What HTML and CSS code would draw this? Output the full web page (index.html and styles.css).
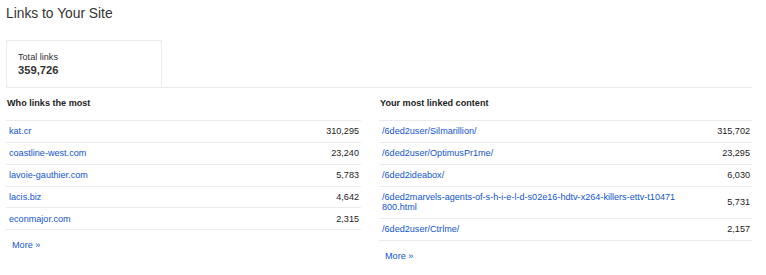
FILE: index.html
```html
<!DOCTYPE html>
<html>
<head>
<meta charset="utf-8">
<title>Links to Your Site</title>
<link rel="stylesheet" href="styles.css">
</head>
<body>
<div class="page">
  <h1 class="title">Links to Your Site</h1>
  <div class="summary">
    <div class="stat">
      <div class="stat-label">Total links</div>
      <div class="stat-value">359,726</div>
    </div>
  </div>
  <div class="columns">
    <section class="col col-left">
      <h2 class="col-heading">Who links the most</h2>
      <div class="list">
        <div class="row"><a class="name" href="#">kat.cr</a><span class="count">310,295</span></div>
        <div class="row"><a class="name" href="#">coastline-west.com</a><span class="count">23,240</span></div>
        <div class="row"><a class="name" href="#">lavoie-gauthier.com</a><span class="count">5,783</span></div>
        <div class="row"><a class="name" href="#">lacis.biz</a><span class="count">4,642</span></div>
        <div class="row"><a class="name" href="#">econmajor.com</a><span class="count">2,315</span></div>
      </div>
      <a class="more" href="#">More &raquo;</a>
    </section>
    <section class="col col-right">
      <h2 class="col-heading">Your most linked content</h2>
      <div class="list">
        <div class="row"><a class="name" href="#">/6ded2user/Silmarillion/</a><span class="count">315,702</span></div>
        <div class="row"><a class="name" href="#">/6ded2user/OptimusPr1me/</a><span class="count">23,295</span></div>
        <div class="row"><a class="name" href="#">/6ded2ideabox/</a><span class="count">6,030</span></div>
        <div class="row"><a class="name" href="#">/6ded2marvels-agents-of-s-h-i-e-l-d-s02e16-hdtv-x264-killers-ettv-t10471800.html</a><span class="count">5,731</span></div>
        <div class="row"><a class="name" href="#">/6ded2user/Ctrlme/</a><span class="count">2,157</span></div>
      </div>
      <a class="more" href="#">More &raquo;</a>
    </section>
  </div>
</div>
</body>
</html>
```

FILE: styles.css
```css
* { box-sizing: border-box; }

html, body {
  margin: 0;
  padding: 0;
  background: #ffffff;
}

body {
  font-family: "Liberation Sans", Arial, sans-serif;
  font-size: 9.1px;
  color: #222222;
}

.page {
  width: 752px;
  padding: 6px 0 0 6px;
}

.title {
  margin: 0;
  font-size: 13.8px;
  font-weight: normal;
  line-height: 16px;
  color: #333333;
}

.summary {
  margin-top: 18px;
  border-bottom: 1px solid #ebebeb;
  display: flex;
}

.stat {
  width: 156px;
  height: 47px;
  border: 1px solid #ebebeb;
  border-bottom: none;
  padding: 10.6px 11px 0 11px;
}

.stat-label {
  line-height: 10.5px;
  color: #333333;
}

.stat-value {
  margin-top: 1.8px;
  font-size: 11.2px;
  font-weight: bold;
  line-height: 13px;
  color: #333333;
}

.columns {
  display: grid;
  grid-template-columns: 355px 373px;
  column-gap: 18px;
}

.col-heading {
  margin: 9.6px 0 0 1px;
  font-size: 9.1px;
  font-weight: bold;
  line-height: 10.5px;
  color: #222222;
}

.list {
  margin-top: 11.9px;
  border-top: 1px solid #ebebeb;
}

.row {
  display: flex;
  justify-content: space-between;
  align-items: center;
  padding: 5.2px 2px 5.2px 3px;
  border-bottom: 1px solid #ebebeb;
  line-height: 10.5px;
}

.name {
  color: #1155cc;
  text-decoration: none;
  max-width: 296px;
  word-break: break-all;
}

.count {
  color: #222222;
  white-space: nowrap;
}

.more {
  display: inline-block;
  margin: 10px 0 0 6px;
  color: #1155cc;
  text-decoration: none;
  line-height: 10.5px;
}
```
